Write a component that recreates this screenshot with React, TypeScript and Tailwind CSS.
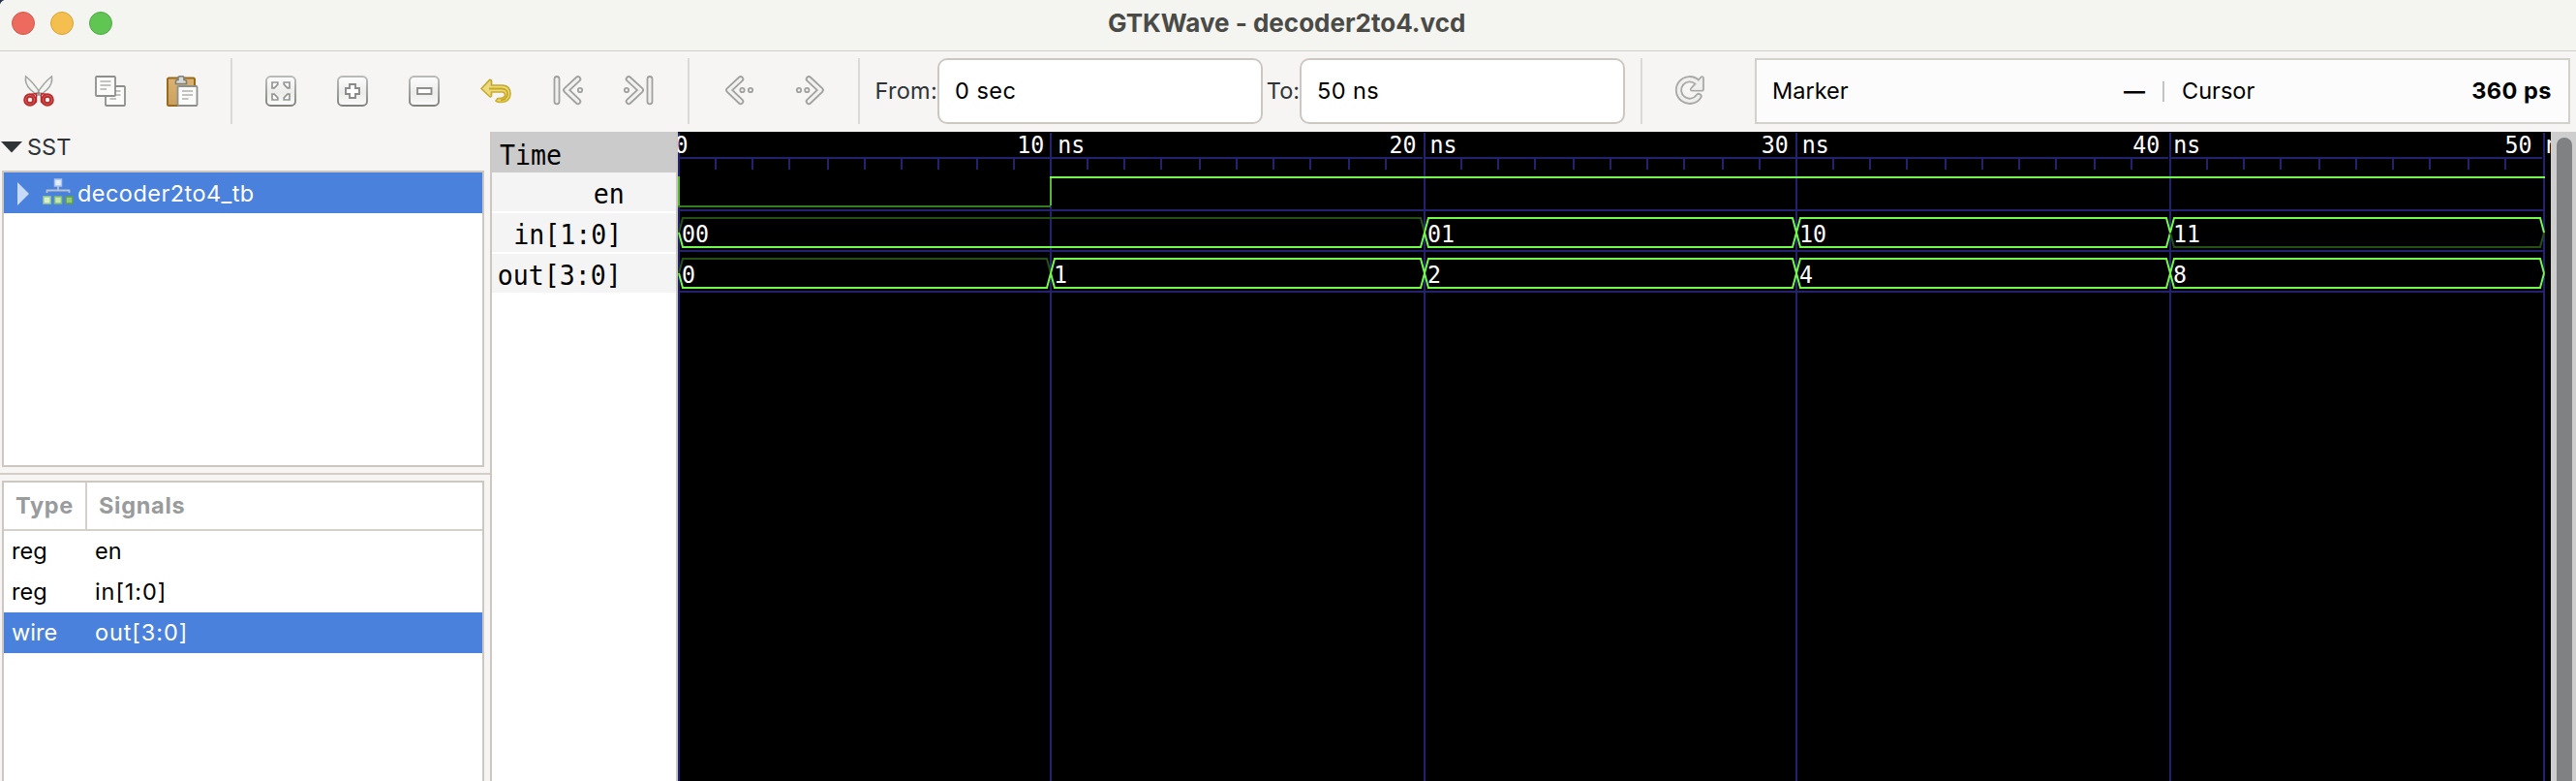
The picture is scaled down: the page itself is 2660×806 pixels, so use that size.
import type { ReactNode } from "react";

const UI = "font-['Inter',sans-serif]";

function Icon({ children }: { children: ReactNode }) {
  return (
    <svg width="32" height="32" viewBox="0 0 32 32" fill="none" className="block overflow-visible">
      {children}
    </svg>
  );
}

function ToolButton({ label, children }: { label: string; children: ReactNode }) {
  return (
    <button aria-label={label} className="flex h-[68px] w-[74px] shrink-0 items-center justify-center">
      <Icon>{children}</Icon>
    </button>
  );
}

function Divider() {
  return <div className="mx-[13px] h-[68px] w-0.5 shrink-0 bg-[#dbdad8]" />;
}

function CutIcon() {
  return (
    <>
      <path d="M2.6 .8C1.8 5 3 10 7.500 14.500L14.500 20.500L17.500 18.500C14 12 8 5.500 2.600 .8Z" fill="#f4f4f2" stroke="#a3a5a0" strokeWidth="1.500" />
      <path d="M29.400 .8C30.200 5 29 10 24.500 14.500L17.500 20.500L14.500 18.500C18 12 24 5.500 29.400 .8Z" fill="#f4f4f2" stroke="#a3a5a0" strokeWidth="1.500" />
      <circle cx="7" cy="25" r="4.500" stroke="#b92b2b" strokeWidth="4.600" />
      <circle cx="7" cy="25" r="4.500" stroke="#d65a58" strokeWidth="1.200" />
      <circle cx="25" cy="25" r="4.500" stroke="#b92b2b" strokeWidth="4.600" />
      <circle cx="25" cy="25" r="4.500" stroke="#d65a58" strokeWidth="1.200" />
      <path d="M8 19.500L13.500 18.500V27L11 29M24 19.500L18.500 18.500V27L21 29" stroke="#b92b2b" strokeWidth="1.500" />
      <circle cx="16" cy="18" r="1.500" fill="#8b8d88" />
    </>
  );
}

function Sheet({ x, y }: { x: number; y: number }) {
  return (
    <g transform={`translate(${x} ${y})`}>
      <rect x="1" y="1" width="20" height="20" rx="1" fill="#fbfbfa" stroke="#8d8f8a" strokeWidth="1.800" />
      <path d="M5.500 6H16.500M5.500 10H16.500M5.500 14H12" stroke="#b0b1ae" strokeWidth="1.700" />
    </g>
  );
}

function CopyIcon() {
  return (
    <>
      <Sheet x={10} y={10} />
      <Sheet x={0} y={0} />
    </>
  );
}

function PasteIcon() {
  return (
    <>
      <defs>
        <linearGradient id="board" x1="0" y1="0" x2="0" y2="1">
          <stop offset="0" stopColor="#dcb272" />
          <stop offset="1" stopColor="#c9a05c" />
        </linearGradient>
      </defs>
      <rect x="1" y="2.500" width="28" height="28.500" rx="1.500" fill="url(#board)" stroke="#9a6a1c" strokeWidth="2" />
      <path d="M9.500 8.500V6Q9.500 4.500 11.500 4.500H12V2Q12 .8 14 .8H16Q18 .8 18 2V4.500H18.500Q20.500 4.500 20.500 6V8.500Z" fill="#d8d9d6" stroke="#7d7f7b" strokeWidth="1.600" />
      <Sheet x={10.500} y={10} />
    </>
  );
}

function Plate() {
  return (
    <>
      <defs>
        <linearGradient id="plate-fill" x1="0" y1="0" x2="0" y2="1">
          <stop offset="0" stopColor="#fdfdfd" />
          <stop offset=".55" stopColor="#ececeb" />
          <stop offset="1" stopColor="#fafafa" />
        </linearGradient>
        <linearGradient id="plate-edge" x1="0" y1="0" x2="0" y2="1">
          <stop offset="0" stopColor="#b9bbb7" />
          <stop offset="1" stopColor="#80827e" />
        </linearGradient>
      </defs>
      <rect x="1" y="1" width="30" height="30" rx="4.500" fill="url(#plate-fill)" stroke="url(#plate-edge)" strokeWidth="1.900" />
    </>
  );
}

function ZoomFitIcon() {
  return (
    <>
      <Plate />
      <g stroke="#959693" strokeWidth="1.700" fill="#fdfdfd">
        <path d="M7 7H12.800V9.200L9.200 12.800H7Z" />
        <path d="M25 7H19.200V9.200L22.800 12.800H25Z" />
        <path d="M7 25H12.800V22.800L9.200 19.200H7Z" />
        <path d="M25 25H19.200V22.800L22.800 19.200H25Z" />
      </g>
    </>
  );
}

function ZoomInIcon() {
  return (
    <>
      <Plate />
      <path d="M13 9H19V13H23V19H19V23H13V19H9V13H13Z" fill="#fff" stroke="#8a8b88" strokeWidth="1.900" />
    </>
  );
}

function ZoomOutIcon() {
  return (
    <>
      <Plate />
      <rect x="9" y="13" width="14.500" height="6" fill="#fff" stroke="#8a8b88" strokeWidth="1.900" />
    </>
  );
}

function UndoIcon() {
  return (
    <>
      <defs>
        <linearGradient id="tail" x1="0" y1="0" x2="0" y2="1">
          <stop offset="0" stopColor="#bfa42c" />
          <stop offset="1" stopColor="#cdb130" />
        </linearGradient>
      </defs>
      <path
        d="M1 13.500L9.500 4.500Q11.500 4 11.500 6V10H23Q31 10.500 31 19Q30.500 27 22 27.500Q17 27.500 16 26L18 23.500Q24.500 24 25.500 20.500Q26 17.500 23 17H11.500V20.500Q11 22.500 9.500 21.500Z"
        fill="#ecd980"
        stroke="url(#tail)"
        strokeWidth="1.700"
        strokeLinejoin="round"
      />
      <path d="M9 13.500H22.500Q28.500 14 28 19.500Q27 25 21 25.500" stroke="#c9a91c" strokeWidth="1.800" />
    </>
  );
}

function Outline({ d, dots = [] }: { d: string; dots?: number[] }) {
  return (
    <>
      <path d={d} stroke="#a0a19e" strokeWidth="6.800" strokeLinecap="round" strokeLinejoin="round" />
      <path d={d} stroke="#f1f1f0" strokeWidth="3.200" strokeLinecap="round" strokeLinejoin="round" />
      {dots.map((x) => (
        <circle key={x} cx={x} cy="15" r="2.200" fill="#f1f1f0" stroke="#a0a19e" strokeWidth="1.800" />
      ))}
    </>
  );
}

function FirstIcon() {
  return (
    <>
      <Outline d="M5 3.500V26.800" />
      <Outline d="M26.800 3.600L14.600 15L26.800 26.700" dots={[29]} />
    </>
  );
}

function LastIcon() {
  return (
    <>
      <Outline d="M27 3.500V26.800" />
      <Outline d="M5.200 3.600L17.600 15L5.200 26.700" dots={[3]} />
    </>
  );
}

function PrevIcon() {
  return <Outline d="M18.800 3.600L6.600 15L18.800 26.700" dots={[20.500, 29]} />;
}

function NextIcon() {
  return <Outline d="M15.200 3.600L27.400 15L15.200 26.700" dots={[5, 13.300]} />;
}

function ReloadIcon() {
  const arc = "M22.500 6.800A11.300 11.300 0 1 0 24 21.500";
  const head = "M27.600 2.600V14.300H17.200Z";
  return (
    <g strokeLinecap="round" strokeLinejoin="round">
      <path d={arc} stroke="#a9aaa7" strokeWidth="7.200" />
      <path d={head} fill="#a9aaa7" stroke="#a9aaa7" strokeWidth="4.600" />
      <path d={arc} stroke="#efefee" strokeWidth="3.400" />
      <path d={head} fill="#efefee" stroke="#efefee" strokeWidth="1" />
    </g>
  );
}

function TreeIcon() {
  return (
    <svg width="32" height="28" viewBox="0 0 32 28" className="block">
      <path d="M4.500 15V12.500H27.500V15M16 8V12" fill="none" stroke="#b9c3d0" strokeWidth="1.800" />
      <rect x="12.500" y="1" width="7" height="7" fill="#e3edfb" stroke="#a9c4ee" strokeWidth="1.500" />
      <rect x="1" y="19" width="7" height="7" fill="#d9f0cf" stroke="#9fd08c" strokeWidth="1.500" />
      <rect x="12.500" y="19" width="7" height="7" fill="#c4e8b4" stroke="#84bf6c" strokeWidth="1.500" />
      <rect x="24" y="19" width="7" height="7" fill="#92cc78" stroke="#5f9f48" strokeWidth="1.500" />
    </svg>
  );
}

const GRID = [1, 385, 771, 1155, 1541, 1927];
const TICKS = [38, 76, 114, 154, 192, 230, 268, 308, 346];
const LABELS = [
  { x: -3.5, text: "0" },
  { x: 350.3, text: "10 ns" },
  { x: 734.5, text: "20 ns" },
  { x: 1118.7, text: "30 ns" },
  { x: 1502.3, text: "40 ns" },
  { x: 1886.5, text: "50 ns" },
];
const CELL = 14;
const BRIGHT = "#72fa49";
const DIM = "#245016";

type Segment = { from: number; to: number; value: string; top: string; bottom: string };

const IN_BUS: Segment[] = [
  { from: 0, to: 2, value: "00", top: DIM, bottom: BRIGHT },
  { from: 2, to: 3, value: "01", top: BRIGHT, bottom: BRIGHT },
  { from: 3, to: 4, value: "10", top: BRIGHT, bottom: BRIGHT },
  { from: 4, to: 5, value: "11", top: BRIGHT, bottom: DIM },
];
const OUT_BUS: Segment[] = [
  { from: 0, to: 1, value: "0", top: DIM, bottom: BRIGHT },
  { from: 1, to: 2, value: "1", top: BRIGHT, bottom: BRIGHT },
  { from: 2, to: 3, value: "2", top: BRIGHT, bottom: BRIGHT },
  { from: 3, to: 4, value: "4", top: BRIGHT, bottom: BRIGHT },
  { from: 4, to: 5, value: "8", top: BRIGHT, bottom: BRIGHT },
];

function MonoText({ x, y, text }: { x: number; y: number; text: string }) {
  return (
    <text
      x={x}
      y={y}
      fill="#fff"
      textLength={text.length * CELL}
      lengthAdjust="spacingAndGlyphs"
      className="whitespace-pre font-['DejaVu_Sans_Mono',monospace] text-[25.500px]"
    >
      {text}
    </text>
  );
}

function Bus({ segments, y }: { segments: Segment[]; y: number }) {
  return (
    <g fill="none" strokeWidth="2">
      {segments.map((s) => {
        const a = GRID[s.from];
        const b = GRID[s.to];
        const top = <path key="top" d={`M${a} ${y}L${a + 4} ${y - 15}H${b - 4}L${b} ${y}`} stroke={s.top} />;
        const bottom = <path key="bottom" d={`M${a} ${y}L${a + 4} ${y + 15}H${b - 4}L${b} ${y}`} stroke={s.bottom} />;
        return <g key={s.value}>{s.top === DIM ? [top, bottom] : [bottom, top]}</g>;
      })}
      {segments.map((s) => (
        <g key={s.value} stroke="none">
          <MonoText x={GRID[s.from] + 3} y={y + 10} text={s.value} />
        </g>
      ))}
    </g>
  );
}

function Waves() {
  return (
    <svg width="1934" height="670" viewBox="0 0 1934 670" className="block shrink-0 bg-black">
      <g stroke="#22226f" strokeWidth="2">
        {GRID.map((x) => (
          <path key={x} d={`M${x} 1V670`} />
        ))}
        <path d="M0 27H769M772 27H1539M1542 27H1925" />
        {GRID.slice(0, 5).map((g) => TICKS.map((t) => <path key={g + t} d={`M${g + t} 28V39`} />))}
        <path d="M2 81H1926M2 123H1926M2 165H1926" />
      </g>
      {LABELS.map((l) => (
        <MonoText key={l.text} x={l.x} y={22} text={l.text} />
      ))}
      <g strokeWidth="2">
        <path d="M0 77H385" stroke="#347c20" />
        <path d="M1 46V76M385 47V76" stroke="#54b837" />
        <path d="M384 47H1928" stroke={BRIGHT} />
      </g>
      <Bus segments={IN_BUS} y={104} />
      <Bus segments={OUT_BUS} y={146} />
    </svg>
  );
}

function NameRow({ text, pad }: { text: string; pad: string }) {
  return (
    <div className={`mb-0.5 flex h-10 items-center justify-end bg-[#f4f4f4] pt-1 ${pad}`}>
      <span className="origin-right scale-x-[.923] font-['DejaVu_Sans_Mono',monospace] text-[28.800px] leading-10">{text}</span>
    </div>
  );
}

function SignalRow({ type, name, selected }: { type: string; name: string; selected?: boolean }) {
  return (
    <div className={`flex h-[42px] items-center text-[23.500px] ${selected ? "bg-[#4a81dd] text-white" : "text-black"}`}>
      <span className="w-[85px] shrink-0 pl-2">{type}</span>
      <span className={`pl-[9px] ${name === "en" ? "" : "tracking-[.9px]"}`}>{name}</span>
    </div>
  );
}

export default function App() {
  return (
    <div className={`flex h-[806px] w-[2660px] flex-col overflow-hidden bg-[#f6f5f4] ${UI} text-[23.500px]`}>
      <header className="relative flex h-[53px] shrink-0 items-start border-b border-[#cfd0ca] bg-[#f4f5f0]">
        <svg width="5" height="5" viewBox="0 0 5 5" className="absolute left-0 top-0">
          <path d="M0 0H4.500Q1 1 0 4.500Z" fill="#26304f" />
        </svg>
        <div className="flex gap-4 pl-3 pt-3">
          <span className="size-6 rounded-full border border-[#d5584c] bg-[#ed6a5e]" />
          <span className="size-6 rounded-full border border-[#d9a13c] bg-[#f5bf4f]" />
          <span className="size-6 rounded-full border border-[#50ab43] bg-[#61c554]" />
        </div>
        <h1 className="ml-[1028px] mt-1.5 whitespace-nowrap text-[26px] font-bold leading-9 text-[#4a4a47]">GTKWave - decoder2to4.vcd</h1>
      </header>

      <div className="flex h-[83px] shrink-0 items-start pl-[3px] pt-[7px]">
        <ToolButton label="Cut"><CutIcon /></ToolButton>
        <ToolButton label="Copy"><CopyIcon /></ToolButton>
        <ToolButton label="Paste"><PasteIcon /></ToolButton>
        <Divider />
        <ToolButton label="Zoom fit"><ZoomFitIcon /></ToolButton>
        <ToolButton label="Zoom in"><ZoomInIcon /></ToolButton>
        <ToolButton label="Zoom out"><ZoomOutIcon /></ToolButton>
        <ToolButton label="Zoom undo"><UndoIcon /></ToolButton>
        <ToolButton label="Zoom to start"><FirstIcon /></ToolButton>
        <ToolButton label="Zoom to end"><LastIcon /></ToolButton>
        <Divider />
        <ToolButton label="Previous edge"><PrevIcon /></ToolButton>
        <ToolButton label="Next edge"><NextIcon /></ToolButton>
        <Divider />
        <span className="flex h-[68px] w-[67px] shrink-0 items-center justify-end whitespace-nowrap tracking-[.3px] text-[#2e3436]">From:</span>
        <div className="flex h-[68px] w-[336px] shrink-0 items-center rounded-[10px] border-2 border-[#cdc7c2] bg-white pl-4 tracking-[.5px] text-black">0 sec</div>
        <span className="flex h-[68px] w-[38px] shrink-0 items-center justify-end text-[#2e3436]">To:</span>
        <div className="flex h-[68px] w-[336px] shrink-0 items-center rounded-[10px] border-2 border-[#cdc7c2] bg-white pl-4 tracking-[.4px] text-black">50 ns</div>
        <div className="w-[3px] shrink-0" />
        <Divider />
        <ToolButton label="Reload"><ReloadIcon /></ToolButton>
        <div className="ml-[29px] flex h-[68px] w-[842px] shrink-0 items-center border-2 border-[#d3d1cc] bg-[#fcfcfc] pl-4 pr-[17px] text-black">
          <span className="flex-1">Marker</span>
          <span className="text-[22px] font-bold">—</span>
          <span className="ml-[18px] mr-[18px] h-[21px] w-0.5 bg-[#c3c3c3]" />
          <span className="w-[298px]">Cursor</span>
          <span className="w-[84px] whitespace-nowrap text-right font-bold tracking-[.5px]">360 ps</span>
        </div>
      </div>

      <div className="flex min-h-0 flex-1">
        <aside className="flex w-[506px] shrink-0 flex-col">
          <div className="flex h-10 shrink-0 items-start gap-1 text-[#2e3436]">
            <svg width="24" height="32" viewBox="0 0 24 32" className="block">
              <path d="M1 10H23L12 21.500Z" fill="#2e3436" />
            </svg>
            <span className="leading-8">SST</span>
          </div>
          <div className="ml-0.5 h-[306px] w-[498px] shrink-0 border-2 border-[#cdc7c2] bg-white">
            <div className="flex h-[42px] items-center bg-[#4a81dd] pt-0.5 text-white">
              <svg width="14" height="24" viewBox="0 0 14 24" className="ml-[13px] block">
                <path d="M1 0L13 12L1 24Z" fill="#c9daf6" />
              </svg>
              <div className="ml-[13px] mt-[-4px]"><TreeIcon /></div>
              <span className="ml-1 tracking-[.45px]">decoder2to4_tb</span>
            </div>
          </div>
          <div className="mt-1.5 h-0.5 shrink-0 bg-[#d3cdc8]" />
          <div className="ml-0.5 mt-1.5 w-[498px] flex-1 border-2 border-b-0 border-[#cdc7c2] bg-white">
            <div className="flex h-[50px] border-b-2 border-[#d5d0cc] font-bold tracking-[.7px] text-[#999b9c]">
              <span className="flex w-[86px] shrink-0 items-center border-r-2 border-[#d5d0cc] pl-3">Type</span>
              <span className="flex items-center pl-3">Signals</span>
            </div>
            <SignalRow type="reg" name="en" />
            <SignalRow type="reg" name="in[1:0]" />
            <SignalRow type="wire" name="out[3:0]" selected />
          </div>
        </aside>

        <section className="w-[194px] shrink-0 border-x-2 border-[#cdc7c2] bg-white text-black">
          <div className="flex h-[42px] items-center bg-[#cbcbcb] pl-2 pt-1.5">
            <span className="origin-left scale-x-[.923] font-['DejaVu_Sans_Mono',monospace] text-[28.800px] leading-10">Time</span>
          </div>
          <NameRow text="en" pad="pr-[53px]" />
          <NameRow text="in[1:0]" pad="pr-[56px]" />
          <NameRow text="out[3:0]" pad="pr-[56px]" />
        </section>

        <Waves />
        <div className="w-[26px] shrink-0 bg-[#cecece] pl-1.5 pt-1.5">
          <div className="h-full w-4 rounded-t-full bg-[#808182]" />
        </div>
      </div>
    </div>
  );
}
